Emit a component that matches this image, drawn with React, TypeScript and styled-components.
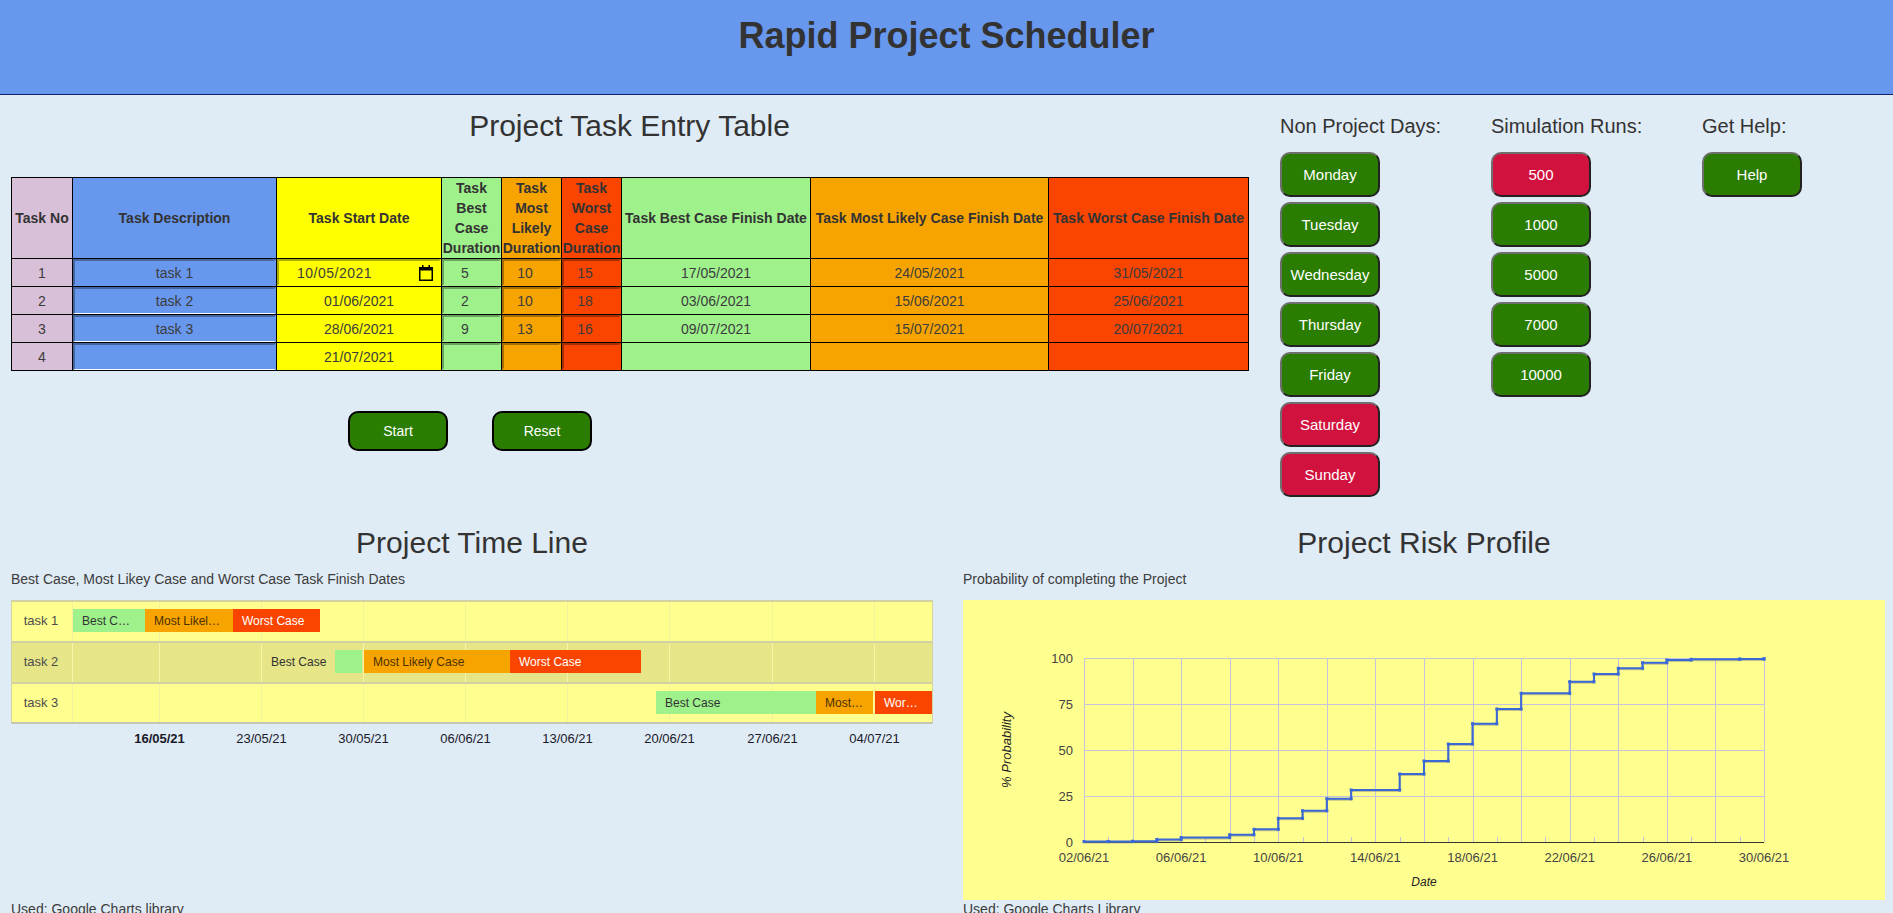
import styled, { createGlobalStyle } from 'styled-components';

const GREEN = '#9ff18c';
const ORANGE = '#f8a400';
const RED = '#f94500';
const BLUE = '#6897ee';
const YELLOW = '#ffff00';
const THISTLE = '#d9c0d9';

const GlobalStyle = createGlobalStyle`
  html, body {
    margin: 0;
    height: 913px;
    overflow: hidden;
  }
  body {
    background: #dfebf5;
    color: #3c3c3c;
    font-family: "Liberation Sans", Arial, sans-serif;
    font-size: 14px;
  }
`;

const Header = styled.header`
  height: 94px;
  background: ${BLUE};
  border-bottom: 1px solid #10206e;
  text-align: center;
`;

const PageTitle = styled.h1`
  margin: 0;
  padding-top: 15px;
  font-size: 36px;
  line-height: 41px;
  font-weight: 700;
  color: #333;
`;

const Main = styled.main`
  padding: 13px 8px 0 11px;
`;

const TopRow = styled.div`
  display: flex;
  gap: 32px;
`;

const EntryPanel = styled.section`
  width: 1237px;
`;

const SectionTitle = styled.h2`
  margin: 0;
  font-size: 30px;
  line-height: 36px;
  font-weight: 400;
  text-align: center;
  color: #333;
`;

const TaskTable = styled.table`
  width: 1237px;
  margin-top: 33px;
  border-collapse: collapse;
  table-layout: fixed;
`;

const HeadCell = styled.th<{ $bg: string }>`
  height: 80px;
  padding: 0;
  background: ${(p) => p.$bg};
  border: 1px solid #000;
  font-size: 14px;
  line-height: 20px;
  font-weight: 700;
  color: #333;
`;

const Cell = styled.td<{ $bg: string }>`
  height: 27px;
  padding: 0;
  background: ${(p) => p.$bg};
  border: 1px solid #000;
  text-align: center;
  font-size: 14px;
  color: #3c3c3c;
`;

const CellInput = styled.input<{ $bg: string; $white?: boolean }>`
  display: block;
  box-sizing: border-box;
  width: 100%;
  height: 27px;
  margin: 0;
  padding: 0 1px;
  background: ${(p) => p.$bg};
  border: 2px solid;
  border-color: rgba(0, 0, 0, 0.32) transparent ${(p) => (p.$white ? '#fff' : 'transparent')} rgba(0, 0, 0, 0.32);
  border-bottom-width: ${(p) => (p.$white ? '1px' : '2px')};
  outline: none;
  text-align: center;
  font-family: inherit;
  font-size: 14px;
  color: #3c3c3c;
  background-clip: padding-box;
`;

const NumberInput = styled(CellInput)`
  padding-right: 14px;
`;

const DateField = styled.div`
  display: flex;
  box-sizing: border-box;
  align-items: center;
  justify-content: space-between;
  height: 27px;
  padding: 0 6px 0 18px;
  border: 2px solid;
  border-color: rgba(0, 0, 0, 0.32) transparent transparent rgba(0, 0, 0, 0.32);
  letter-spacing: 0.5px;
`;

const ActionRow = styled.div`
  display: flex;
  gap: 44px;
  margin-top: 40px;
  padding-left: 337px;
`;

const ActionButton = styled.button`
  box-sizing: border-box;
  width: 100px;
  height: 40px;
  background: #2a7d00;
  border: 2px solid #000;
  border-radius: 10px;
  font-family: inherit;
  font-size: 14px;
  color: #fff;
`;

const Sidebar = styled.aside`
  display: flex;
`;

const OptionColumn = styled.div`
  display: flex;
  flex-direction: column;
  align-items: flex-start;
  width: 211px;
`;

const OptionTitle = styled.h3`
  margin: 0 0 8px;
  font-size: 20px;
  line-height: 36px;
  font-weight: 400;
  color: #333;
`;

const OptionList = styled.div`
  display: flex;
  flex-direction: column;
  gap: 5px;
`;

const OptionButton = styled.button<{ $off?: boolean }>`
  box-sizing: border-box;
  width: 100px;
  height: 45px;
  padding: 0;
  background: ${(p) => (p.$off ? '#d2123e' : '#2a7d00')};
  border: 2px solid;
  border-color: #6f6f6f #222 #222 #6f6f6f;
  border-radius: 10px;
  font-family: inherit;
  font-size: 15px;
  color: #fff;
`;

const BottomRow = styled.div`
  display: grid;
  grid-template-columns: 922px 922px;
  column-gap: 30px;
  margin-top: 28px;
`;

const ChartTitle = styled.p`
  margin: 9px 0 12px;
  font-size: 14px;
  line-height: 18px;
`;

const ChartFrame = styled.svg<{ $bg?: string }>`
  display: block;
  width: 922px;
  height: 300px;
  background: ${(p) => p.$bg ?? 'transparent'};
  font-family: "Liberation Sans", Arial, sans-serif;
`;

const ChartNote = styled.p`
  margin: 0;
  font-size: 14px;
  line-height: 18px;
`;

const TASKS = [
  { no: 1, name: 'task 1', start: '10/05/2021', best: 5, likely: 10, worst: 15, bestEnd: '17/05/2021', likelyEnd: '24/05/2021', worstEnd: '31/05/2021' },
  { no: 2, name: 'task 2', start: '01/06/2021', best: 2, likely: 10, worst: 18, bestEnd: '03/06/2021', likelyEnd: '15/06/2021', worstEnd: '25/06/2021' },
  { no: 3, name: 'task 3', start: '28/06/2021', best: 9, likely: 13, worst: 16, bestEnd: '09/07/2021', likelyEnd: '15/07/2021', worstEnd: '20/07/2021' },
  { no: 4, name: '', start: '21/07/2021', best: '', likely: '', worst: '', bestEnd: '', likelyEnd: '', worstEnd: '' },
];

const COLUMNS = [61, 204, 165, 60, 60, 60, 189, 238, 200];

const DAYS: [string, boolean][] = [
  ['Monday', false],
  ['Tuesday', false],
  ['Wednesday', false],
  ['Thursday', false],
  ['Friday', false],
  ['Saturday', true],
  ['Sunday', true],
];

const RUNS: [string, boolean][] = [
  ['500', true],
  ['1000', false],
  ['5000', false],
  ['7000', false],
  ['10000', false],
];

function CalendarIcon() {
  return (
    <svg width="14" height="16" viewBox="0 0 14 16" aria-hidden="true">
      <rect x="0.75" y="2.75" width="12.5" height="12.5" fill="none" stroke="#000" strokeWidth="1.5" />
      <rect x="0" y="2" width="14" height="3.5" fill="#000" />
      <rect x="3" y="0" width="1.5" height="3" fill="#000" />
      <rect x="9.5" y="0" width="1.5" height="3" fill="#000" />
    </svg>
  );
}

const GRID_X = [61, 148, 250, 352, 454, 556, 658, 761, 863];
const AXIS = ['', '16/05/21', '23/05/21', '30/05/21', '06/06/21', '13/06/21', '20/06/21', '27/06/21', '04/07/21'];

const ROWS = [
  { label: 'task 1', top: 0, height: 41, bg: '#ffff90', line: '#f3f19c', barY: 9 },
  { label: 'task 2', top: 41, height: 41, bg: '#e6e588', line: '#f6f5a6', barY: 50 },
  { label: 'task 3', top: 82, height: 41, bg: '#ffff90', line: '#f3f19c', barY: 91 },
];

const BARS = [
  { x: 62, w: 72, fill: GREEN, text: 'Best C…', tx: 71, color: '#333' },
  { x: 134, w: 88, fill: ORANGE, text: 'Most Likel…', tx: 143, color: '#4a3000' },
  { x: 222, w: 87, fill: RED, text: 'Worst Case', tx: 231, color: '#fff', bold: true },
];

const BARS_2 = [
  { x: 324, w: 27, fill: GREEN, text: 'Best Case', tx: 260, color: '#333' },
  { x: 353, w: 146, fill: ORANGE, text: 'Most Likely Case', tx: 362, color: '#4a3000' },
  { x: 499, w: 131, fill: RED, text: 'Worst Case', tx: 508, color: '#fff', bold: true },
];

const BARS_3 = [
  { x: 645, w: 160, fill: GREEN, text: 'Best Case', tx: 654, color: '#333' },
  { x: 805, w: 57, fill: ORANGE, text: 'Most…', tx: 814, color: '#4a3000' },
  { x: 864, w: 58, fill: RED, text: 'Wor…', tx: 873, color: '#fff', bold: true },
];

function TimelineChart() {
  const allBars = [BARS, BARS_2, BARS_3];
  return (
    <ChartFrame viewBox="0 0 922 300">
      {ROWS.map((row, i) => (
        <g key={row.label}>
          <rect x="0" y={row.top} width="922" height={row.height} fill={row.bg} />
          {GRID_X.map((x) => (
            <rect key={x} x={x} y={row.top + 1} width="1" height={row.height - 1} fill={row.line} />
          ))}
          <rect x="0" y={row.top} width="922" height="2" fill="#d2d1a4" />
          <text x="30" y={row.top + 25} fontSize="13" textAnchor="middle" fill="#4d4d4d">
            {row.label}
          </text>
          {allBars[i].map((bar) => (
            <g key={bar.fill}>
              <rect x={bar.x} y={row.barY} width={bar.w} height="23" fill={bar.fill} />
              <text x={bar.tx} y={row.barY + 16} fontSize="12" fill={bar.color} fontWeight={bar.bold ? 500 : 400}>
                {bar.text}
              </text>
            </g>
          ))}
        </g>
      ))}
      <rect x="0" y="122" width="922" height="2" fill="#c6c6b4" />
      <rect x="0" y="0" width="1" height="123" fill="#d2d1a4" />
      <rect x="921" y="0" width="1" height="123" fill="#d2d1a4" />
      {AXIS.map((label, i) => (
        <text
          key={GRID_X[i]}
          x={GRID_X[i] + 0.5}
          y="143"
          fontSize="13"
          textAnchor="middle"
          fill="#1a1a2a"
          fontWeight={i === 1 ? 700 : 400}
        >
          {label}
        </text>
      ))}
    </ChartFrame>
  );
}

const PLOT_LEFT = 121;
const PLOT_RIGHT = 801;
const PLOT_TOP = 58;
const PLOT_BOTTOM = 242;
const DAY_W = (PLOT_RIGHT - PLOT_LEFT) / 28;

// y pixels of the step line for each day, read off the reference
const STEPS = [241.6, 241.5, 241.2, 239.5, 237.5, 237.5, 234.7, 229.3, 218.3, 210.7, 198.7, 190, 190, 174, 161, 144, 123.7, 109, 93.3, 93.3, 81.7, 74, 68.3, 62.7, 60, 59.3, 59.3, 59, 58.7];

const DATE_LABELS = ['02/06/21', '06/06/21', '10/06/21', '14/06/21', '18/06/21', '22/06/21', '26/06/21', '30/06/21'];

function RiskChart() {
  const dayX = (d: number) => PLOT_LEFT + d * DAY_W;
  let line = `M${dayX(0)} ${STEPS[0]}`;
  STEPS.forEach((y, d) => {
    if (d > 0) line += ` H${dayX(d)} V${y}`;
  });
  const gridColor = '#c4c4dc';
  return (
    <ChartFrame viewBox="0 0 922 300" $bg="#ffff90">
      {[0, 1, 2, 3].map((i) => (
        <rect key={i} x={PLOT_LEFT} y={PLOT_TOP + i * 46} width={PLOT_RIGHT - PLOT_LEFT} height="1" fill={gridColor} />
      ))}
      {Array.from({ length: 29 }, (_, d) => (
        <rect
          key={d}
          x={Math.round(dayX(d))}
          y={d % 2 === 0 ? PLOT_TOP : PLOT_BOTTOM - 5}
          width="1"
          height={d % 2 === 0 ? PLOT_BOTTOM - PLOT_TOP : 5}
          fill={gridColor}
        />
      ))}
      <rect x={PLOT_LEFT} y={PLOT_BOTTOM} width={PLOT_RIGHT - PLOT_LEFT} height="1" fill="#333" />
      {['100', '75', '50', '25', '0'].map((label, i) => (
        <text key={label} x="110" y={PLOT_TOP + i * 46 + 5} fontSize="13" textAnchor="end" fill="#444">
          {label}
        </text>
      ))}
      {DATE_LABELS.map((label, i) => (
        <text key={label} x={dayX(i * 4)} y="262" fontSize="13" textAnchor="middle" fill="#444">
          {label}
        </text>
      ))}
      <text x="461" y="286" fontSize="12" fontStyle="italic" textAnchor="middle" fill="#222">
        Date
      </text>
      <text
        transform="translate(48 150) rotate(-90)"
        fontSize="13"
        fontStyle="italic"
        textAnchor="middle"
        fill="#222"
      >
        % Probability
      </text>
      <path d={line} fill="none" stroke="#8a8a80" strokeOpacity="0.5" strokeWidth="2" transform="translate(0 1)" />
      <path d={line} fill="none" stroke="#3a68d6" strokeWidth="2" />
      {STEPS.map((y, d) =>
        d > 0 && y === STEPS[d - 1] ? null : (
          <g key={d} fill="#3a68d6">
            <rect x={dayX(d) - 1.5} y={y - 1.5} width="3" height="3" />
            {d > 0 && <rect x={dayX(d) - 1.5} y={STEPS[d - 1] - 1.5} width="3" height="3" />}
          </g>
        ),
      )}
    </ChartFrame>
  );
}

export default function App() {
  return (
    <>
      <GlobalStyle />
      <Header>
        <PageTitle>Rapid Project Scheduler</PageTitle>
      </Header>
      <Main>
        <TopRow>
          <EntryPanel>
            <SectionTitle>Project Task Entry Table</SectionTitle>
            <TaskTable>
              <colgroup>
                {COLUMNS.map((w, i) => (
                  <col key={i} style={{ width: w }} />
                ))}
              </colgroup>
              <thead>
                <tr>
                  <HeadCell $bg={THISTLE}>Task No</HeadCell>
                  <HeadCell $bg={BLUE}>Task Description</HeadCell>
                  <HeadCell $bg={YELLOW}>Task Start Date</HeadCell>
                  <HeadCell $bg={GREEN}>Task Best Case Duration</HeadCell>
                  <HeadCell $bg={ORANGE}>Task Most Likely Duration</HeadCell>
                  <HeadCell $bg={RED}>Task Worst Case Duration</HeadCell>
                  <HeadCell $bg={GREEN}>Task Best Case Finish Date</HeadCell>
                  <HeadCell $bg={ORANGE}>Task Most Likely Case Finish Date</HeadCell>
                  <HeadCell $bg={RED}>Task Worst Case Finish Date</HeadCell>
                </tr>
              </thead>
              <tbody>
                {TASKS.map((task) => (
                  <tr key={task.no}>
                    <Cell $bg={THISTLE}>{task.no}</Cell>
                    <Cell $bg={BLUE}>
                      <CellInput $bg={BLUE} $white={task.no > 1} readOnly value={task.name} />
                    </Cell>
                    <Cell $bg={YELLOW}>
                      {task.no === 1 ? (
                        <DateField>
                          <span>{task.start}</span>
                          <CalendarIcon />
                        </DateField>
                      ) : (
                        task.start
                      )}
                    </Cell>
                    <Cell $bg={GREEN}>
                      <NumberInput $bg={GREEN} readOnly value={task.best} />
                    </Cell>
                    <Cell $bg={ORANGE}>
                      <NumberInput $bg={ORANGE} readOnly value={task.likely} />
                    </Cell>
                    <Cell $bg={RED}>
                      <NumberInput $bg={RED} readOnly value={task.worst} />
                    </Cell>
                    <Cell $bg={GREEN}>{task.bestEnd}</Cell>
                    <Cell $bg={ORANGE}>{task.likelyEnd}</Cell>
                    <Cell $bg={RED}>{task.worstEnd}</Cell>
                  </tr>
                ))}
              </tbody>
            </TaskTable>
            <ActionRow>
              <ActionButton type="button">Start</ActionButton>
              <ActionButton type="button">Reset</ActionButton>
            </ActionRow>
          </EntryPanel>
          <Sidebar>
            <OptionColumn>
              <OptionTitle>Non Project Days:</OptionTitle>
              <OptionList>
                {DAYS.map(([day, off]) => (
                  <OptionButton key={day} type="button" $off={off}>
                    {day}
                  </OptionButton>
                ))}
              </OptionList>
            </OptionColumn>
            <OptionColumn>
              <OptionTitle>Simulation Runs:</OptionTitle>
              <OptionList>
                {RUNS.map(([runs, off]) => (
                  <OptionButton key={runs} type="button" $off={off}>
                    {runs}
                  </OptionButton>
                ))}
              </OptionList>
            </OptionColumn>
            <OptionColumn>
              <OptionTitle>Get Help:</OptionTitle>
              <OptionList>
                <OptionButton type="button">Help</OptionButton>
              </OptionList>
            </OptionColumn>
          </Sidebar>
        </TopRow>
        <BottomRow>
          <section>
            <SectionTitle>Project Time Line</SectionTitle>
            <ChartTitle>Best Case, Most Likey Case and Worst Case Task Finish Dates</ChartTitle>
            <TimelineChart />
            <ChartNote>Used: Google Charts library</ChartNote>
          </section>
          <section>
            <SectionTitle>Project Risk Profile</SectionTitle>
            <ChartTitle>Probability of completing the Project</ChartTitle>
            <RiskChart />
            <ChartNote>Used: Google Charts Library</ChartNote>
          </section>
        </BottomRow>
      </Main>
    </>
  );
}
